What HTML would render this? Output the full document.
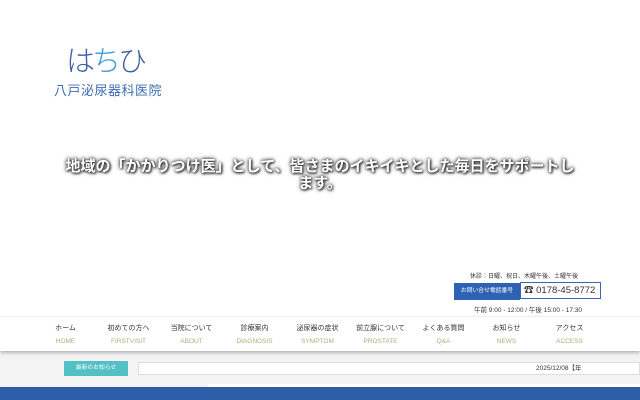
<!DOCTYPE html>
<html><head><meta charset="utf-8"><style>
body{margin:0;width:640px;height:400px;overflow:hidden;background:#fff;font-family:"Liberation Sans","Noto Sans CJK JP",sans-serif;position:relative}
.abs{position:absolute}
.hero{left:0;width:640px;top:158px;text-align:center;color:#fff;font-weight:bold;font-size:15px;line-height:17px;text-shadow:0 0 3px #333,0 0 5px #444,1px 1px 2px #222}
.nav{left:0;top:316px;width:640px;height:34px;background:#fff;box-shadow:0 2px 3px rgba(0,0,0,.25);border-top:1px solid #eee}
.it{position:absolute;top:6px;width:63px;text-align:center;font-size:7px;color:#333}
.it b{display:block;font-weight:normal;color:#b5ab78;font-size:6.5px;margin-top:5px}
</style></head><body>
<div class="abs" style="left:66px;top:38px;font-size:29px;color:#3c5fa8;font-family:'Noto Sans CJK JP',sans-serif;font-weight:300;letter-spacing:-3px">は<span style="color:#3d9fd6">ち</span>ひ</div>
<div class="abs" style="left:54px;top:80px;font-size:13px;color:#3b6cb3;letter-spacing:0.5px">八戸泌尿器科医院</div>
<div class="abs hero">地域の「かかりつけ医」として、皆さまのイキイキとした毎日をサポートし<br>ます。</div>
<div class="abs" style="left:470px;top:271px;font-size:6px;color:#333">休診：日曜、祝日、木曜午後、土曜午後</div>
<div class="abs" style="left:454px;top:283px;width:66px;height:17px;background:#2e62b4;color:#fff;font-size:5.8px;line-height:17px;text-align:center">お問い合せ電話番号</div>
<div class="abs" style="left:520px;top:282px;width:81px;height:17px;border:1px solid #3a64b0;box-sizing:border-box;background:#fff;font-size:9.5px;line-height:15px;color:#333;padding-left:3px">☎ 0178-45-8772</div>
<div class="abs" style="left:474px;top:304px;font-size:6.5px;color:#333">午前 9:00 - 12:00 / 午後 15:00 - 17:30</div>
<div class="abs" style="left:0;top:350px;width:640px;height:50px;background:#f3f3f3"></div>
<div class="abs nav">
<div class="it" style="left:34px">ホーム<b>HOME</b></div>
<div class="it" style="left:97px">初めての方へ<b>FIRSTVISIT</b></div>
<div class="it" style="left:160px">当院について<b>ABOUT</b></div>
<div class="it" style="left:223px">診療案内<b>DIAGNOSIS</b></div>
<div class="it" style="left:286px">泌尿器の症状<b>SYMPTOM</b></div>
<div class="it" style="left:349px">前立腺について<b>PROSTATE</b></div>
<div class="it" style="left:412px">よくある質問<b>Q&amp;A</b></div>
<div class="it" style="left:475px">お知らせ<b>NEWS</b></div>
<div class="it" style="left:538px">アクセス<b>ACCESS</b></div>
</div>
<div class="abs" style="left:64px;top:361px;width:64px;height:15px;background:#52c0c4;color:#fff;font-size:5.8px;line-height:15px;text-align:center">最新のお知らせ</div>
<div class="abs" style="left:138px;top:362px;width:502px;height:13px;background:#fff;border:1px solid #ddd;box-sizing:border-box;font-size:6.5px;line-height:11px;color:#333;padding-left:397px;overflow:hidden;white-space:nowrap">2025/12/08【年</div>
<div class="abs" style="left:208px;top:384px;width:432px;height:4px;background:#fff"></div>
<div class="abs" style="left:0;top:387px;width:640px;height:13px;background:#2f5ea8"></div>
</body></html>
